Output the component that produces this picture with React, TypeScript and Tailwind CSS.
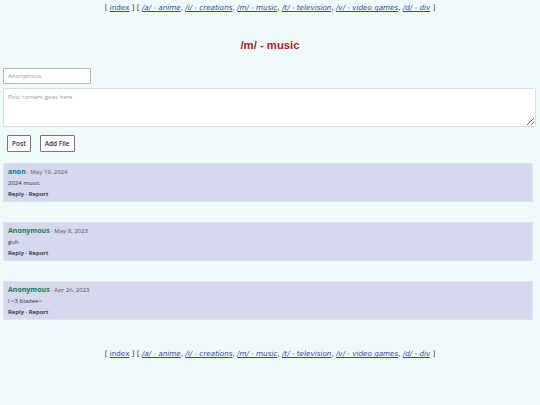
import React from "react"

const boards = [
  { href: "#a", label: "/a/ - anime" },
  { href: "#i", label: "/i/ - creations" },
  { href: "#m", label: "/m/ - music" },
  { href: "#t", label: "/t/ - television" },
  { href: "#v", label: "/v/ - video games" },
  { href: "#d", label: "/d/ - div" },
]

const posts = [
  { name: "anon", date: "May 19, 2024", body: "2024 music" },
  { name: "Anonymous", date: "May 8, 2023", body: "guh" },
  { name: "Anonymous", date: "Apr 26, 2023", body: "i <3 bladee>" },
]

function Nav() {
  return (
    <div className="text-center text-[7.2px] leading-[10px] text-[#333] font-['DejaVu_Sans',Verdana,sans-serif]">
      [ <a href="#" className="text-[#3344aa] underline">index</a> ] [{" "}
      {boards.map((b, i) => (
        <span key={b.href}>
          <a href={b.href} className="text-[#3344aa] underline italic">
            {b.label}
          </a>
          {i < boards.length - 1 ? ", " : " "}
        </span>
      ))}
      ]
    </div>
  )
}

export default function App() {
  return (
    <div className="min-h-[405px] w-[540px] bg-[#f1fafa] font-['Open_Sans',Lato,sans-serif] text-[#333]">
      <div className="pt-[3px]">
        <Nav />
      </div>

      <h1 className="mt-[24px] text-center text-[11.3px] leading-[16px] font-bold text-[#b3192b] font-['Liberation_Sans',Arial,sans-serif]">
        /m/ - music
      </h1>

      <form className="mt-[15px] px-[3px]" onSubmit={(e) => e.preventDefault()}>
        <input
          type="text"
          placeholder="Anonymous"
          className="block w-[88px] h-[16px] px-[4px] text-[6px] bg-white border border-[#b9b9b9] rounded-[1px] placeholder:text-[#999] outline-none"
        />
        <textarea
          placeholder="Post content goes here"
          className="block mt-[4px] w-[533px] h-[39px] px-[4px] py-[4px] text-[6px] leading-[8px] bg-white border border-[#dcdcdc] rounded-[1px] placeholder:text-[#999] outline-none"
        />
        <div className="flex gap-[9px] mt-[8px] pl-[4px]">
          <button
            type="button"
            className="h-[17px] px-[4px] text-[6.5px] font-semibold text-[#333] bg-white border border-[#777] rounded-[1px]"
          >
            Post
          </button>
          <button
            type="button"
            className="h-[17px] px-[4px] text-[6.5px] font-semibold text-[#333] bg-white border border-[#777] rounded-[1px]"
          >
            Add File
          </button>
        </div>
      </form>

      <div className="mt-[11px] flex flex-col gap-[20px] pl-[3px] pr-[7px]">
        {posts.map((p, i) => (
          <div
            key={i}
            className="h-[39px] bg-[#d6d8ee] border border-[#e0e2f2] px-[4px] pt-[2px] text-[6px] leading-[11px]"
          >
            <div>
              <span className="font-bold text-[#1f7a4c] text-[7px]">{p.name}</span>
              <span className="text-[#555]"> · {p.date}</span>
            </div>
            <div className="text-[#333]">{p.body}</div>
            <div className="font-semibold text-[#222]">
              <a href="#">Reply</a> · <a href="#">Report</a>
            </div>
          </div>
        ))}
      </div>

      <div className="mt-[29px]">
        <Nav />
      </div>
    </div>
  )
}
